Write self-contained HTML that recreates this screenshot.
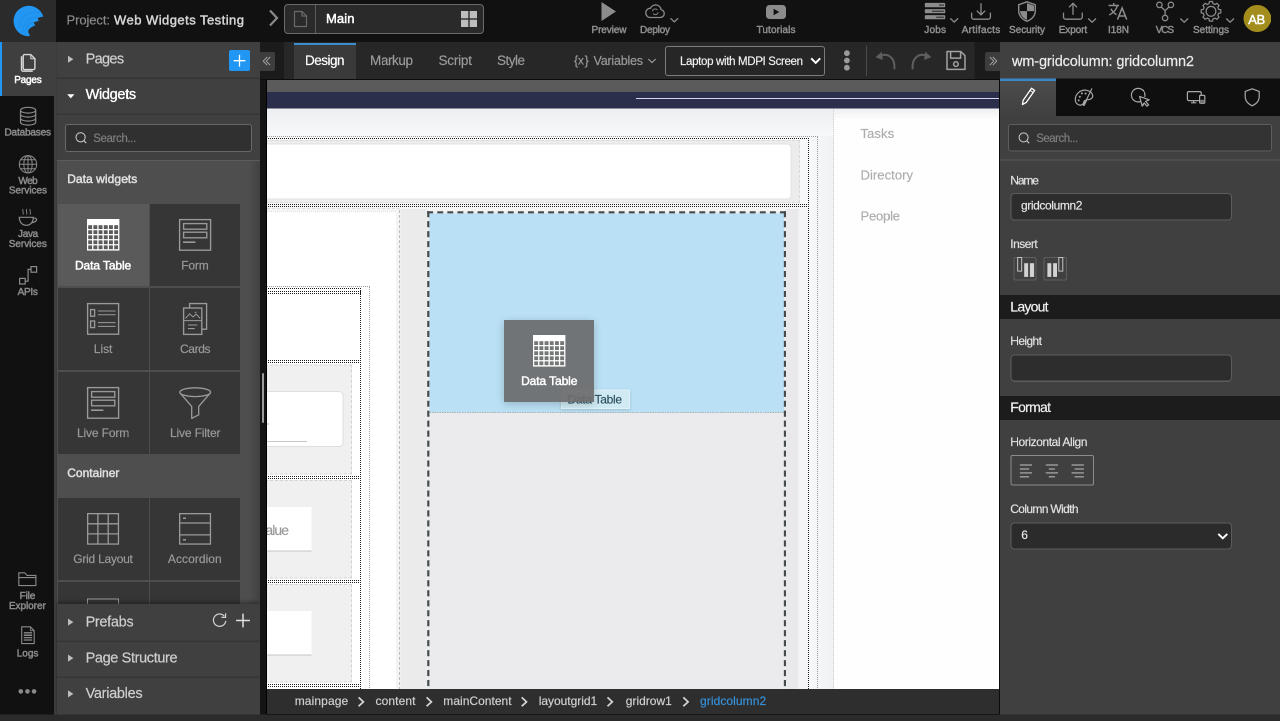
<!DOCTYPE html>
<html>
<head>
<meta charset="utf-8">
<title>Studio</title>
<style>
*{box-sizing:border-box;margin:0;padding:0}
html,body{width:1280px;height:721px;overflow:hidden;background:#111;font-family:"Liberation Sans",sans-serif;}
.a{position:absolute}
.t{position:absolute;white-space:nowrap;line-height:1}
svg{position:absolute;overflow:visible}
#clip{position:absolute;left:0;top:0;width:1280px;height:721px;overflow:hidden}
#outer{position:absolute;left:0;top:0;width:2560px;height:1442px;transform:scale(.5);transform-origin:0 0;will-change:transform;overflow:hidden}
#root{position:relative;width:1280px;height:721px;overflow:hidden;background:#111;zoom:2}
</style>
</head>
<body>
<div id="clip"><div id="outer"><div id="root">

<!-- TOP BAR -->
<div class="a" style="left:0;top:0;width:1280px;height:42px;background:#111"></div>
<div class="a" style="left:0;top:0;width:56px;height:42px;background:#2b2b2b"></div>
<svg style="left:0;top:0" width="56" height="42" viewBox="0 0 56 42"><path fill="#2196f3" d="M43.3 16.6 A15.2 15.2 0 1 0 28.4 36.2 L30.3 35.3 Q27.4 32.6 28.5 30.2 Q29.6 27.6 35.4 25.4 Q34 24.2 33.9 22.6 Q35.6 21.4 39 21 Q37.8 19.6 37.9 18 Q40 16.8 43.3 16.6Z"/>
<g fill="none" stroke="#1a7fd4" stroke-width="0.7" opacity="0.55"><path d="M38 17.6 Q24 16 22.5 33"/><path d="M34 22.4 Q25.6 22.6 25.6 35"/><path d="M40.6 13 Q22 8.5 18.6 29"/></g></svg>
<div class="t" style="left:66.50px;top:13.50px;font-size:13px;color:#8a8a8a;letter-spacing:-0.083px;-webkit-text-stroke:0.18px #8a8a8a;">Project:</div>
<div class="t" style="left:114.00px;top:13.50px;font-size:13px;color:#d4d4d4;letter-spacing:0.464px;-webkit-text-stroke:0.48px #d4d4d4;">Web Widgets Testing</div>
<svg style="left:0;top:0" width="300" height="42"><path d="M270 10.5 L277 18 L270 25.5" fill="none" stroke="#8a8a8a" stroke-width="2.2"/></svg>
<div class="a" style="left:284px;top:4px;width:200px;height:30px;background:#2a2a2a;border:1px solid #6a6a6a;border-radius:4px"></div>
<div class="a" style="left:315px;top:5px;width:1px;height:28px;background:#5a5a5a"></div>
<svg style="left:0;top:0" width="500" height="42"><path d="M294.5 11.5 h7.5 l4.5 4.5 v10.5 h-12 z M302 11.5 v4.5 h4.5" fill="none" stroke="#696969" stroke-width="1.2"/></svg>
<div class="t" style="left:326.00px;top:12.00px;font-size:13px;color:#fff;letter-spacing:0.107px;-webkit-text-stroke:0.48px #fff;">Main</div>
<svg style="left:461px;top:11px" width="16" height="16"><g fill="#bebebe"><rect x="0" y="0" width="7.3" height="7.3"/><rect x="8.7" y="0" width="7.3" height="7.3"/><rect x="0" y="8.7" width="7.3" height="7.3"/><rect x="8.7" y="8.7" width="7.3" height="7.3"/></g></svg>
<svg style="left:0;top:0" width="1280" height="42"><path d="M601.5 2 L616 11.5 L601.5 21Z" fill="#8c8c8c"/></svg>
<div class="t" style="left:591.50px;top:24.50px;font-size:10px;color:#8c8c8c;letter-spacing:-0.095px;-webkit-text-stroke:0.48px #8c8c8c;">Preview</div>
<svg style="left:0;top:0" width="1280" height="42"><path d="M649.5 17.5 h11 a4 4 0 0 0 0.6 -7.9 a5.6 5.6 0 0 0 -10.6 -1.4 a4.7 4.7 0 0 0 -1 9.3z" fill="none" stroke="#8c8c8c" stroke-width="1.3"/>
<path d="M652.3 11.3 a3 3 0 0 1 5.2 -1.3 M658.2 12.3 a3 3 0 0 1 -5.2 1.3" fill="none" stroke="#8c8c8c" stroke-width="0.9"/>
<path d="M670.5 18.3 l3.8 3.6 l3.8 -3.6" fill="none" stroke="#8c8c8c" stroke-width="1.3"/></svg>
<div class="t" style="left:640.00px;top:24.50px;font-size:10px;color:#8c8c8c;letter-spacing:-0.227px;-webkit-text-stroke:0.48px #8c8c8c;">Deploy</div>
<svg style="left:0;top:0" width="1280" height="42"><rect x="766" y="5" width="20" height="14" rx="3.5" fill="#8c8c8c"/><path d="M773.6 8.8 L779.3 12 L773.6 15.2Z" fill="#111"/></svg>
<div class="t" style="left:756.50px;top:24.50px;font-size:10px;color:#8c8c8c;letter-spacing:0.128px;-webkit-text-stroke:0.48px #8c8c8c;">Tutorials</div>
<svg style="left:0;top:0" width="1280" height="42"><g fill="#8c8c8c"><rect x="924.8" y="2.9" width="20.4" height="4.4" rx="0.8"/><rect x="924.8" y="9.1" width="20.4" height="4.2" rx="0.8"/><rect x="924.8" y="15.1" width="20.4" height="4.2" rx="0.8"/></g>
<g fill="#222"><rect x="939" y="4.6" width="5" height="1"/><rect x="932" y="10.7" width="11.8" height="1"/><rect x="936.3" y="16.7" width="7.6" height="1"/></g>
<path d="M950.3 18.4 l3.9 3.7 l3.9 -3.7" fill="none" stroke="#8c8c8c" stroke-width="1.3"/></svg>
<div class="t" style="left:924.30px;top:24.50px;font-size:10px;color:#8c8c8c;letter-spacing:0.192px;-webkit-text-stroke:0.48px #8c8c8c;">Jobs</div>
<svg style="left:0;top:0" width="1280" height="42"><path d="M971.6 12.6 v4.4 a2.2 2.2 0 0 0 2.2 2.2 h14.4 a2.2 2.2 0 0 0 2.2 -2.2 v-4.4 M981 3.3 v11.3 M976.8 10.7 l4.2 4.1 l4.2 -4.1" fill="none" stroke="#8c8c8c" stroke-width="1.3"/></svg>
<div class="t" style="left:961.70px;top:24.50px;font-size:10px;color:#8c8c8c;letter-spacing:0.297px;-webkit-text-stroke:0.48px #8c8c8c;">Artifacts</div>
<svg style="left:0;top:0" width="1280" height="42"><path d="M1027 1.8 l8.3 2.9 v6 c0 5 -3.5 8.8 -8.3 10.5 c-4.8 -1.7 -8.3 -5.5 -8.3 -10.5 v-6z" fill="none" stroke="#8c8c8c" stroke-width="1.4"/>
<path d="M1027 3.2 v7.9 h7 v-5.5z M1027 11.1 h-7 c0.5 4.2 3 7.2 7 8.7z" fill="#8c8c8c"/></svg>
<div class="t" style="left:1009.00px;top:24.50px;font-size:10px;color:#8c8c8c;letter-spacing:-0.018px;-webkit-text-stroke:0.48px #8c8c8c;">Security</div>
<svg style="left:0;top:0" width="1280" height="42"><path d="M1063.5 12.6 v4.4 a2.2 2.2 0 0 0 2.2 2.2 h14.4 a2.2 2.2 0 0 0 2.2 -2.2 v-4.4 M1073 14.8 v-11.3 M1069 7.3 l4 -4 l4 4" fill="none" stroke="#8c8c8c" stroke-width="1.3"/>
<path d="M1088.2 18.5 l3.9 3.7 l3.9 -3.7" fill="none" stroke="#8c8c8c" stroke-width="1.3"/></svg>
<div class="t" style="left:1058.70px;top:24.50px;font-size:10px;color:#8c8c8c;letter-spacing:-0.081px;-webkit-text-stroke:0.48px #8c8c8c;">Export</div>
<svg style="left:0;top:0" width="1280" height="42"><path d="M1108.5 5.5 h10.5 M1113.7 3 v2.5 M1117.3 5.5 c-0.8 3.8 -3.8 7.2 -8 9.5 M1111 8.7 c1 2.4 3 4.4 5.6 6" fill="none" stroke="#8c8c8c" stroke-width="1.4"/>
<path d="M1117.5 19.5 l4.6 -11.5 l4.6 11.5 M1119 16 h6.2" fill="none" stroke="#8c8c8c" stroke-width="1.6"/></svg>
<div class="t" style="left:1108.00px;top:24.50px;font-size:10px;color:#8c8c8c;letter-spacing:-0.042px;-webkit-text-stroke:0.48px #8c8c8c;">I18N</div>
<svg style="left:0;top:0" width="1280" height="42"><g fill="none" stroke="#8c8c8c" stroke-width="1.3"><circle cx="1159.4" cy="4.9" r="2.7"/><circle cx="1170.9" cy="4.9" r="2.7"/><circle cx="1165.1" cy="18" r="2.7"/><path d="M1161.2 7 l3.9 3.6 l3.9 -3.6 M1165.1 10.6 v4.7"/></g>
<path d="M1180.3 18.5 l3.9 3.7 l3.9 -3.7" fill="none" stroke="#8c8c8c" stroke-width="1.3"/></svg>
<div class="t" style="left:1155.80px;top:24.50px;font-size:10px;color:#8c8c8c;letter-spacing:-1.181px;-webkit-text-stroke:0.48px #8c8c8c;">VCS</div>
<svg style="left:0;top:0" width="1280" height="42"><path d="M1218.65 9.34 L1220.78 9.75 L1220.78 12.85 L1218.65 13.26 L1217.80 15.32 L1219.01 17.12 L1216.82 19.31 L1215.02 18.10 L1212.96 18.95 L1212.55 21.08 L1209.45 21.08 L1209.04 18.95 L1206.98 18.10 L1205.18 19.31 L1202.99 17.12 L1204.20 15.32 L1203.35 13.26 L1201.22 12.85 L1201.22 9.75 L1203.35 9.34 L1204.20 7.28 L1202.99 5.48 L1205.18 3.29 L1206.98 4.50 L1209.04 3.65 L1209.45 1.52 L1212.55 1.52 L1212.96 3.65 L1215.02 4.50 L1216.82 3.29 L1219.01 5.48 L1217.80 7.28Z" fill="none" stroke="#8c8c8c" stroke-width="1.25" stroke-linejoin="round"/><circle cx="1211" cy="11.3" r="4.9" fill="none" stroke="#8c8c8c" stroke-width="1.25"/>
<path d="M1226.2 18.5 l3.9 3.7 l3.9 -3.7" fill="none" stroke="#8c8c8c" stroke-width="1.3"/></svg>
<div class="t" style="left:1193.00px;top:24.50px;font-size:10px;color:#8c8c8c;letter-spacing:-0.019px;-webkit-text-stroke:0.48px #8c8c8c;">Settings</div>
<div class="a" style="left:1243.7px;top:4.8px;width:27.2px;height:27.2px;border-radius:50%;background:#a38d1c"></div>
<div class="t" style="left:1248.20px;top:13.00px;font-size:13px;color:#fff;letter-spacing:-0.344px;-webkit-text-stroke:0.48px #fff;">AB</div>
<!-- TOOLBAR -->
<div class="a" style="left:260px;top:42px;width:740px;height:38px;background:#1b1b1b"></div>
<div class="a" style="left:284px;top:42px;width:690.4px;height:37px;background:#272727"></div>
<div class="a" style="left:260px;top:79px;width:740px;height:1px;background:#0c0c0c"></div>
<div class="a" style="left:260px;top:52px;width:15px;height:19px;background:#3d3d3d;border-radius:0 2px 2px 0"></div>
<svg style="left:0;top:0" width="1280" height="90"><path d="M267.2 57 l-4 4.1 l4 4.1 M270.2 57 l-4 4.1 l4 4.1" fill="none" stroke="#a8a8a8" stroke-width="0.9"/></svg>
<div class="a" style="left:294px;top:43px;width:62px;height:36px;background:#3a3a3a;border-top:2px solid #3c8dd0"></div>
<div class="t" style="left:305.00px;top:54.00px;font-size:13.5px;color:#fff;letter-spacing:-0.505px;-webkit-text-stroke:0.18px #fff;">Design</div>
<div class="t" style="left:370.00px;top:54.00px;font-size:13.5px;color:#9a9a9a;letter-spacing:-0.403px;-webkit-text-stroke:0.18px #9a9a9a;">Markup</div>
<div class="t" style="left:438.50px;top:54.00px;font-size:13.5px;color:#9a9a9a;letter-spacing:-0.203px;-webkit-text-stroke:0.18px #9a9a9a;">Script</div>
<div class="t" style="left:497.00px;top:54.00px;font-size:13.5px;color:#9a9a9a;letter-spacing:-0.504px;-webkit-text-stroke:0.18px #9a9a9a;">Style</div>
<div class="t" style="left:574.00px;top:54.50px;font-size:12.5px;color:#9a9a9a;-webkit-text-stroke:0.18px #9a9a9a;">{</div>
<div class="t" style="left:577.90px;top:54.50px;font-size:12px;color:#9a9a9a;-webkit-text-stroke:0.18px #9a9a9a;">x</div>
<div class="t" style="left:584.60px;top:54.50px;font-size:12.5px;color:#9a9a9a;-webkit-text-stroke:0.18px #9a9a9a;">}</div>
<div class="t" style="left:593.50px;top:54.50px;font-size:12.5px;color:#9a9a9a;letter-spacing:-0.211px;-webkit-text-stroke:0.18px #9a9a9a;">Variables</div>
<svg style="left:0;top:0" width="1280" height="90"><path d="M648.3 59 l3.7 3.6 l3.7 -3.6" fill="none" stroke="#9a9a9a" stroke-width="1.2"/></svg>
<div class="a" style="left:665px;top:46px;width:160px;height:30px;background:#262626;border:1px solid #7c7c7c;border-radius:3px"></div>
<div class="t" style="left:680.00px;top:55.50px;font-size:11.5px;color:#f0f0f0;letter-spacing:-0.336px;-webkit-text-stroke:0.18px #f0f0f0;">Laptop with MDPI Screen</div>
<svg style="left:0;top:0" width="1280" height="90"><path d="M811.2 58.3 l4.5 4.5 l4.5 -4.5" fill="none" stroke="#fff" stroke-width="2"/></svg>
<svg style="left:0;top:0" width="1280" height="90"><g fill="#9a9a9a"><circle cx="846.9" cy="53.2" r="2.9"/><circle cx="846.9" cy="60.5" r="2.9"/><circle cx="846.9" cy="67.7" r="2.9"/></g></svg>
<div class="a" style="left:866px;top:45.8px;width:1px;height:30.2px;background:#4c4c4c"></div>
<svg style="left:0;top:0" width="1280" height="90"><g fill="none" stroke="#5e5e5e" stroke-width="2" stroke-linecap="round">
<path d="M881 55.8 C888 52.6 895.2 58 894.4 68.6"/><path d="M926 55.8 C919 52.6 911.8 58 912.6 68.6"/></g>
<g fill="#5e5e5e"><path d="M875.6 57.3 L881.8 51.6 L882.8 60z"/><path d="M931.4 57.3 L925.2 51.6 L924.2 60z"/></g>
<g fill="none" stroke="#a2a2a2" stroke-width="1.5" stroke-linejoin="round"><path d="M947 51.5 h13.8 l4.2 4.2 v13.7 h-18z"/><path d="M950.6 51.5 v6.6 h10 v-6.6"/><circle cx="955.9" cy="64.1" r="2.3"/></g></svg>
<div class="a" style="left:985px;top:52px;width:15px;height:19px;background:#3d3d3d;border-radius:2px 0 0 2px"></div>
<svg style="left:0;top:0" width="1280" height="90"><path d="M989.8 57 l4 4.1 l-4 4.1 M992.8 57 l4 4.1 l-4 4.1" fill="none" stroke="#a8a8a8" stroke-width="0.9"/></svg>
<!-- ICON BAR -->
<div class="a" style="left:0;top:42px;width:54px;height:672.7px;background:#111"></div>
<div class="a" style="left:54px;top:42px;width:3px;height:672.7px;background:#3f3f3f"></div>
<div class="a" style="left:0;top:42px;width:56.3px;height:54px;background:#3f3f3f;border-left:2.2px solid #2196f3"></div>
<div class="a" style="left:56.3px;top:42px;width:0.8px;height:672.5px;background:#373737"></div>
<svg style="left:0;top:0" width="60" height="721"><g fill="none" stroke="#d8d8d8" stroke-width="1.4" stroke-linejoin="round">
<path d="M21.5 56.2 v13.4 a1.6 1.6 0 0 0 1.6 1.6 h9.6"/><path d="M24.6 54.6 h6.2 l4.1 4.1 v9.5 a1.4 1.4 0 0 1 -1.4 1.4 h-8.9 a1.4 1.4 0 0 1 -1.4 -1.4 v-12.2 a1.4 1.4 0 0 1 1.4 -1.4z"/><path d="M30.8 54.6 v4.1 h4.1" stroke-width="1"/></g></svg>
<div class="t" style="left:14.20px;top:74.50px;font-size:10px;color:#fff;letter-spacing:-0.190px;-webkit-text-stroke:0.48px #fff;">Pages</div>
<svg style="left:0;top:0" width="60" height="721"><g fill="none" stroke="#8a8a8a" stroke-width="1.2">
<ellipse cx="28.1" cy="110.2" rx="7.6" ry="2.9"/><path d="M20.5 110.2 v12 a7.6 2.9 0 0 0 15.2 0 v-12"/><path d="M20.5 114.2 a7.6 2.9 0 0 0 15.2 0 M20.5 118.2 a7.6 2.9 0 0 0 15.2 0"/></g></svg>
<div class="t" style="left:4.50px;top:127.00px;font-size:10px;color:#8a8a8a;letter-spacing:-0.164px;-webkit-text-stroke:0.48px #8a8a8a;">Databases</div>
<svg style="left:0;top:0" width="60" height="721"><g fill="none" stroke="#8a8a8a" stroke-width="1">
<circle cx="28" cy="164.3" r="8.7"/><ellipse cx="28" cy="164.3" rx="4.2" ry="8.7"/><path d="M28 155.6 v17.4 M19.3 164.3 h17.4 M20.6 159.8 h14.8 M20.6 168.8 h14.8"/></g></svg>
<div class="t" style="left:18.40px;top:175.50px;font-size:10px;color:#8a8a8a;letter-spacing:-0.541px;-webkit-text-stroke:0.48px #8a8a8a;">Web</div>
<div class="t" style="left:8.90px;top:185.00px;font-size:10px;color:#8a8a8a;letter-spacing:-0.036px;-webkit-text-stroke:0.48px #8a8a8a;">Services</div>
<svg style="left:0;top:0" width="60" height="721"><g fill="none" stroke="#8a8a8a" stroke-width="1.2">
<path d="M19.3 217.3 h14 c0 5 -3 8 -7 8 s-7 -3 -7 -8z"/><path d="M33.2 218.2 c3 -0.6 4 1 3 2.4 c-0.7 1 -2.4 1.8 -4.2 2"/>
<path d="M23 209 c-0.9 1.6 0.9 3.6 0 5.6 M26.6 209 c-0.9 1.6 0.9 3.6 0 5.6 M30.2 209 c-0.9 1.6 0.9 3.6 0 5.6" stroke-width="0.9"/></g></svg>
<div class="t" style="left:18.00px;top:228.50px;font-size:10px;color:#8a8a8a;letter-spacing:-0.308px;-webkit-text-stroke:0.48px #8a8a8a;">Java</div>
<div class="t" style="left:8.70px;top:238.50px;font-size:10px;color:#8a8a8a;letter-spacing:-0.022px;-webkit-text-stroke:0.48px #8a8a8a;">Services</div>
<svg style="left:0;top:0" width="60" height="721"><g fill="none" stroke="#8a8a8a" stroke-width="1.2">
<rect x="19.6" y="278.4" width="5.6" height="5.6"/><rect x="31" y="266.6" width="5.6" height="5.6"/><path d="M25.2 281.2 h2.9 v-11.8 h2.9"/></g></svg>
<div class="t" style="left:17.60px;top:286.50px;font-size:10px;color:#8a8a8a;letter-spacing:-0.275px;-webkit-text-stroke:0.48px #8a8a8a;">APIs</div>
<svg style="left:0;top:0" width="60" height="721"><g fill="none" stroke="#8a8a8a" stroke-width="1.1" stroke-linejoin="round">
<path d="M18.8 585.6 v-12.8 h6 l2.2 2.6 h8.9 v10.2z"/><path d="M18.8 577.6 h17.1"/></g></svg>
<div class="t" style="left:19.60px;top:590.50px;font-size:10px;color:#8a8a8a;letter-spacing:-0.139px;-webkit-text-stroke:0.48px #8a8a8a;">File</div>
<div class="t" style="left:8.90px;top:600.50px;font-size:10px;color:#8a8a8a;letter-spacing:-0.049px;-webkit-text-stroke:0.48px #8a8a8a;">Explorer</div>
<svg style="left:0;top:0" width="60" height="721"><g fill="none" stroke="#8a8a8a" stroke-width="1.1" stroke-linejoin="round">
<path d="M21.7 626.8 h8.6 l3.9 3.9 v12.9 h-12.5z"/><path d="M30.3 626.8 v3.9 h3.9" stroke-width="0.8"/></g>
<g stroke="#8a8a8a" stroke-width="1.3"><path d="M23.8 632.8 h8.3 M23.8 635.2 h8.3 M23.8 637.6 h8.3 M23.8 640 h8.3"/></g></svg>
<div class="t" style="left:16.70px;top:648.00px;font-size:10px;color:#8a8a8a;letter-spacing:0.004px;-webkit-text-stroke:0.48px #8a8a8a;">Logs</div>
<svg style="left:0;top:0" width="60" height="721"><g fill="#8a8a8a"><circle cx="20.8" cy="691.4" r="2.3"/><circle cx="27.45" cy="691.4" r="2.3"/><circle cx="34.05" cy="691.4" r="2.3"/></g></svg>
<!-- LEFT PANEL -->
<div class="a" style="left:57px;top:42px;width:203px;height:672.5px;background:#404040"></div>
<div class="a" style="left:57px;top:161px;width:203px;height:444px;background:#4e4e4e"></div><div class="a" style="left:248px;top:161px;width:12px;height:444px;background:linear-gradient(90deg,rgba(0,0,0,0),rgba(0,0,0,.16))"></div>
<div class="a" style="left:57px;top:77.5px;width:203px;height:1.5px;background:#333"></div>
<div class="a" style="left:57px;top:113.5px;width:203px;height:1.5px;background:#353535"></div>
<div class="a" style="left:57px;top:160.2px;width:203px;height:1px;background:#5c5c5c"></div>
<svg style="left:0;top:0" width="270" height="721"><path d="M68 55.8 l5.4 3.5 l-5.4 3.5z" fill="#bdbdbd"/><path d="M67.2 94.2 h7.2 l-3.6 4.2z" fill="#fff"/></svg>
<div class="t" style="left:85.60px;top:51.50px;font-size:14.5px;color:#cfcfcf;letter-spacing:-0.654px;-webkit-text-stroke:0.18px #cfcfcf;">Pages</div>
<div class="t" style="left:85.60px;top:87.00px;font-size:14.5px;color:#fff;letter-spacing:-0.314px;-webkit-text-stroke:0.32px #fff;">Widgets</div>
<div class="a" style="left:229px;top:50.2px;width:21px;height:21px;background:#2196f3;border-radius:2px"></div>
<svg style="left:0;top:0" width="270" height="100"><path d="M239.5 54.8 v11.8 M233.6 60.7 h11.8" stroke="#fff" stroke-width="1.3" fill="none"/></svg>
<div class="a" style="left:65px;top:124px;width:187px;height:28px;background:#303030;border:1px solid #686868;border-radius:3px"></div>
<svg style="left:0;top:0" width="270" height="200"><circle cx="80.6" cy="137.3" r="4.6" fill="none" stroke="#c0c0c0" stroke-width="1.1"/><path d="M84 140.8 l2.3 2.3" stroke="#c0c0c0" stroke-width="1.2"/></svg>
<div class="t" style="left:93.20px;top:132.50px;font-size:11.5px;color:#7e7e7e;letter-spacing:-0.378px;-webkit-text-stroke:0.18px #7e7e7e;">Search...</div>
<div class="t" style="left:67.20px;top:173.00px;font-size:12px;color:#e0e0e0;letter-spacing:0.057px;-webkit-text-stroke:0.48px #e0e0e0;">Data widgets</div>
<div class="t" style="left:67.20px;top:467.00px;font-size:12px;color:#e0e0e0;letter-spacing:0.021px;-webkit-text-stroke:0.48px #e0e0e0;">Container</div>
<div class="a" style="left:58px;top:204.2px;width:90.8px;height:82px;background:#363636"></div>
<div class="a" style="left:150.2px;top:204.2px;width:89.8px;height:82px;background:#363636"></div>
<div class="a" style="left:58px;top:288px;width:90.8px;height:82px;background:#363636"></div>
<div class="a" style="left:150.2px;top:288px;width:89.8px;height:82px;background:#363636"></div>
<div class="a" style="left:58px;top:371.8px;width:90.8px;height:82.2px;background:#363636"></div>
<div class="a" style="left:150.2px;top:371.8px;width:89.8px;height:82.2px;background:#363636"></div>
<div class="a" style="left:58px;top:498px;width:90.8px;height:82px;background:#363636"></div>
<div class="a" style="left:150.2px;top:498px;width:89.8px;height:82px;background:#363636"></div>
<div class="a" style="left:58px;top:204.2px;width:90.8px;height:82px;background:#5a5a5a"></div>
<div class="a" style="left:58px;top:582.2px;width:90.8px;height:23px;background:#363636"></div>
<div class="a" style="left:150.2px;top:582.2px;width:89.8px;height:23px;background:#363636"></div>
<svg style="left:87px;top:219.2px" width="32.4" height="31.6" viewBox="0 0 32.4 31.6"><rect width="32.4" height="31.6" fill="#fff"/><g fill="#5a5a5a"><rect x="1.20" y="6.20" width="3.9" height="3.8"/><rect x="6.40" y="6.20" width="3.9" height="3.8"/><rect x="11.60" y="6.20" width="3.9" height="3.8"/><rect x="16.80" y="6.20" width="3.9" height="3.8"/><rect x="22.00" y="6.20" width="3.9" height="3.8"/><rect x="27.20" y="6.20" width="3.9" height="3.8"/><rect x="1.20" y="11.25" width="3.9" height="3.8"/><rect x="6.40" y="11.25" width="3.9" height="3.8"/><rect x="11.60" y="11.25" width="3.9" height="3.8"/><rect x="16.80" y="11.25" width="3.9" height="3.8"/><rect x="22.00" y="11.25" width="3.9" height="3.8"/><rect x="27.20" y="11.25" width="3.9" height="3.8"/><rect x="1.20" y="16.30" width="3.9" height="3.8"/><rect x="6.40" y="16.30" width="3.9" height="3.8"/><rect x="11.60" y="16.30" width="3.9" height="3.8"/><rect x="16.80" y="16.30" width="3.9" height="3.8"/><rect x="22.00" y="16.30" width="3.9" height="3.8"/><rect x="27.20" y="16.30" width="3.9" height="3.8"/><rect x="1.20" y="21.35" width="3.9" height="3.8"/><rect x="6.40" y="21.35" width="3.9" height="3.8"/><rect x="11.60" y="21.35" width="3.9" height="3.8"/><rect x="16.80" y="21.35" width="3.9" height="3.8"/><rect x="22.00" y="21.35" width="3.9" height="3.8"/><rect x="27.20" y="21.35" width="3.9" height="3.8"/><rect x="1.20" y="26.40" width="3.9" height="3.8"/><rect x="6.40" y="26.40" width="3.9" height="3.8"/><rect x="11.60" y="26.40" width="3.9" height="3.8"/><rect x="16.80" y="26.40" width="3.9" height="3.8"/><rect x="22.00" y="26.40" width="3.9" height="3.8"/><rect x="27.20" y="26.40" width="3.9" height="3.8"/></g></svg>
<div class="t" style="left:75.00px;top:259.50px;font-size:12px;color:#fff;letter-spacing:-0.106px;-webkit-text-stroke:0.48px #fff;">Data Table</div>
<svg style="left:179.2px;top:219.2px" width="33" height="33"><g fill="none" stroke="#9a9a9a" stroke-width="1.35"><rect x="0.6" y="0.6" width="31" height="30.6"/><rect x="4.6" y="4.6" width="23.2" height="5.6"/><rect x="4.6" y="13.2" width="23.2" height="5.6"/></g><path d="M4 23.2 h12.4" stroke="#9a9a9a" stroke-width="1.6"/></svg>
<div class="t" style="left:181.30px;top:259.50px;font-size:12px;color:#9a9a9a;letter-spacing:-0.200px;-webkit-text-stroke:0.18px #9a9a9a;">Form</div>
<svg style="left:87px;top:303.2px" width="33" height="33"><g fill="none" stroke="#9a9a9a" stroke-width="1.35"><rect x="0.6" y="0.6" width="31" height="30.6"/><rect x="3.6" y="6.6" width="4" height="6.6"/><rect x="3.6" y="18" width="4" height="6.6"/>
<path d="M11 8 h17.6 M11 11.8 h17.6 M11 19.6 h17.6 M11 23.4 h17.6" stroke-width="1"/></g></svg>
<div class="t" style="left:93.80px;top:343.00px;font-size:12px;color:#9a9a9a;letter-spacing:-0.027px;-webkit-text-stroke:0.18px #9a9a9a;">List</div>
<svg style="left:183px;top:303.2px" width="30" height="33"><g fill="none" stroke="#9a9a9a" stroke-width="1.35"><path d="M6.6 5 v-4.4 h17 v25.6 h-4.6"/><rect x="0.6" y="5" width="18.2" height="26.4" fill="#363636"/>
<path d="M2.4 15.4 l4.2 -4.6 l3.4 3.2 l3.2 -2.8 l4 4.2 M0.6 17.6 h18.2" stroke-width="1"/><path d="M5 22 h9.4 M5 25.6 h6.8" stroke-width="1.1"/></g><circle cx="12.6" cy="9.4" r="0.8" fill="#9a9a9a"/></svg>
<div class="t" style="left:180.00px;top:343.00px;font-size:12px;color:#9a9a9a;letter-spacing:-0.379px;-webkit-text-stroke:0.18px #9a9a9a;">Cards</div>
<svg style="left:87px;top:387px" width="33" height="33"><g fill="none" stroke="#9a9a9a" stroke-width="1.35"><rect x="0.6" y="0.6" width="31" height="30.6"/><rect x="4.6" y="4.6" width="23.2" height="5.6"/><rect x="4.6" y="13.2" width="23.2" height="5.6"/></g><path d="M4 23.2 h12.4" stroke="#9a9a9a" stroke-width="1.6"/></svg>
<div class="t" style="left:77.00px;top:427.00px;font-size:12px;color:#9a9a9a;letter-spacing:-0.143px;-webkit-text-stroke:0.18px #9a9a9a;">Live Form</div>
<svg style="left:179px;top:387px" width="33" height="33"><g fill="none" stroke="#9a9a9a" stroke-width="1.3" stroke-linejoin="round"><ellipse cx="16.2" cy="5.2" rx="15.4" ry="4.4"/><path d="M0.9 5.8 l11.8 13.6 v12 l7 -3.6 v-8.4 l11.8 -13.6"/></g></svg>
<div class="t" style="left:170.00px;top:427.00px;font-size:12px;color:#9a9a9a;letter-spacing:-0.152px;-webkit-text-stroke:0.18px #9a9a9a;">Live Filter</div>
<svg style="left:87px;top:513px" width="33" height="33"><g fill="none" stroke="#9a9a9a" stroke-width="1.3"><rect x="0.65" y="0.65" width="30.8" height="30.4"/><path d="M10.9 0.65 v30.4 M21.2 0.65 v30.4 M0.65 10.8 h30.8 M0.65 20.9 h30.8"/></g></svg>
<div class="t" style="left:73.30px;top:553.00px;font-size:12px;color:#9a9a9a;letter-spacing:-0.244px;-webkit-text-stroke:0.18px #9a9a9a;">Grid Layout</div>
<svg style="left:179.2px;top:513px" width="33" height="33"><g fill="none" stroke="#9a9a9a" stroke-width="1.3"><rect x="0.65" y="0.65" width="30.8" height="30.4"/><path d="M0.65 10 h30.8 M0.65 21.9 h30.8"/></g><path d="M4 5.3 h3 M4 26.8 h3" stroke="#9a9a9a" stroke-width="1.5"/></svg>
<div class="t" style="left:167.90px;top:553.00px;font-size:12px;color:#9a9a9a;letter-spacing:0.054px;-webkit-text-stroke:0.18px #9a9a9a;">Accordion</div>
<div class="a" style="left:87px;top:598.6px;width:32px;height:7px;border:1.3px solid #9a9a9a;border-bottom:none"></div>
<div class="a" style="left:57px;top:604px;width:203px;height:110.5px;background:#404040;box-shadow:0 -2px 4px rgba(0,0,0,.35)"></div>
<div class="a" style="left:57px;top:640.5px;width:203px;height:1.5px;background:#353535"></div>
<div class="a" style="left:57px;top:676.7px;width:203px;height:1.5px;background:#353535"></div>
<svg style="left:0;top:0" width="270" height="721"><g fill="#bdbdbd"><path d="M68 618.6 l5.4 3.5 l-5.4 3.5z"/><path d="M68 654.6 l5.4 3.5 l-5.4 3.5z"/><path d="M68 690.4 l5.4 3.5 l-5.4 3.5z"/></g></svg>
<div class="t" style="left:85.60px;top:614.50px;font-size:14.5px;color:#cfcfcf;letter-spacing:-0.329px;-webkit-text-stroke:0.18px #cfcfcf;">Prefabs</div>
<div class="t" style="left:85.60px;top:650.50px;font-size:14.5px;color:#cfcfcf;letter-spacing:-0.364px;-webkit-text-stroke:0.18px #cfcfcf;">Page Structure</div>
<div class="t" style="left:85.60px;top:686.00px;font-size:14.5px;color:#cfcfcf;letter-spacing:-0.297px;-webkit-text-stroke:0.18px #cfcfcf;">Variables</div>
<svg style="left:0;top:0" width="270" height="721"><g fill="none" stroke="#d0d0d0" stroke-width="1.2"><path d="M224.4 616.2 a6.2 6.2 0 1 0 1.4 4.6"/><path d="M225.6 613.2 v4.2 h-4.2"/></g>
<path d="M243 613.6 v13.8 M236.1 620.5 h13.8" stroke="#e0e0e0" stroke-width="1.5" fill="none"/></svg>
<!-- CANVAS -->
<div class="a" style="left:267px;top:80px;width:732px;height:609px;background:#f5f6f8;overflow:hidden">
<div class="a" style="left:0.00px;top:0.00px;width:732.00px;height:12.00px;background:#5b5b5b"></div>
<div class="a" style="left:0.00px;top:12.00px;width:732.00px;height:16.70px;background:#2c2f4b"></div>
<div class="a" style="left:369.00px;top:17.80px;width:363.00px;height:1.00px;background:#d5d8ea"></div>
<div class="a" style="left:0.00px;top:28.70px;width:567.00px;height:28.00px;background:linear-gradient(180deg,#eceef1,#f7f8f9)"></div>
<div class="a" style="left:0.00px;top:56.00px;width:567.00px;height:553.00px;background:#f6f7f8"></div>
<div class="a" style="left:542.00px;top:56.00px;width:25.00px;height:553.00px;background:linear-gradient(90deg,#f7f8f9,#eff1f3)"></div>
<div class="a" style="left:567.00px;top:28.70px;width:165.00px;height:581.00px;background:#fefefe"></div>
<div class="a" style="left:567.00px;top:28.70px;width:165.00px;height:12.00px;background:linear-gradient(180deg,#eeeff1,#fefefe)"></div>
<div class="a" style="left:566.00px;top:29.00px;width:1.00px;height:581.00px;background:repeating-linear-gradient(180deg,#cfcfcf 0 1px,transparent 1px 2px)"></div>
<div class="t" style="left:593.50px;top:47.00px;font-size:13px;color:#adadad;letter-spacing:0.091px;-webkit-text-stroke:0.18px #adadad;">Tasks</div>
<div class="t" style="left:593.50px;top:88.50px;font-size:13px;color:#adadad;letter-spacing:0.062px;-webkit-text-stroke:0.18px #adadad;">Directory</div>
<div class="t" style="left:593.50px;top:129.50px;font-size:13px;color:#adadad;letter-spacing:-0.197px;-webkit-text-stroke:0.18px #adadad;">People</div>
<div class="a" style="left:-7.00px;top:60.00px;width:539.80px;height:63.00px;background:#ececec;border:1px dashed #d8d8d8"></div>
<div class="a" style="left:-7.00px;top:63.50px;width:531.50px;height:56.00px;background:#fff;border:1px solid #e2e2e2;border-radius:4px"></div>
<div class="a" style="left:0.00px;top:128.00px;width:541.00px;height:481.00px;background:#f5f5f6"></div>
<div class="a" style="left:-7.00px;top:131.00px;width:137.50px;height:480.00px;background:#fff;border:1px dotted #dcdcdc;border-radius:3px"></div>
<div class="a" style="left:0.00px;top:128.20px;width:133.00px;height:1.00px;border-top:1px dashed #e0e0e0"></div>
<div class="a" style="left:132.20px;top:130.00px;width:1.00px;height:480.00px;border-left:1px dashed #bdbdbd"></div>
<div class="a" style="left:133.50px;top:129.00px;width:27.00px;height:480.00px;background:#ebebec"></div>
<div class="a" style="left:161.00px;top:131.50px;width:358.00px;height:478.00px;background:#ebebed"></div>
<div class="a" style="left:162.40px;top:133.40px;width:354.60px;height:199.00px;background:#b9e0f4"></div>
<div class="a" style="left:162.40px;top:332.00px;width:354.60px;height:1.00px;border-top:0.8px dashed #66747a"></div>
<svg style="left:0;top:0" width="732" height="609"><path d="M161.3 131.15 V620" stroke="#454b4d" stroke-width="2.2" fill="none" stroke-dasharray="6.1 3.876"/><path d="M160.2 132.3 H519.1" stroke="#454b4d" stroke-width="2.2" fill="none" stroke-dasharray="5.9 4.18"/><path d="M517.95 131.15 V620" stroke="#454b4d" stroke-width="2.2" fill="none" stroke-dasharray="6.1 3.876"/></svg>
<div class="a" style="left:519.10px;top:129.00px;width:12.40px;height:481.00px;background:#e9e9eb"></div>
<div class="a" style="left:531.50px;top:129.00px;width:10.00px;height:481.00px;background:#f4f4f6"></div>
<div class="a" style="left:0.00px;top:56.00px;width:551.00px;height:1.00px;background:repeating-linear-gradient(90deg,#9c9c9c 0 1px,transparent 1px 2px)"></div>
<div class="a" style="left:550.00px;top:57.00px;width:1.00px;height:553.00px;background:repeating-linear-gradient(180deg,#9c9c9c 0 1px,transparent 1px 2px)"></div>
<div class="a" style="left:1.00px;top:58.00px;width:541.00px;height:1.00px;background:repeating-linear-gradient(90deg,#1c1c1c 0 1px,transparent 1px 2px)"></div>
<div class="a" style="left:541.00px;top:58.00px;width:1.00px;height:552.00px;background:repeating-linear-gradient(180deg,#1c1c1c 0 1px,transparent 1px 2px)"></div>
<div class="a" style="left:1.00px;top:124.00px;width:541.00px;height:1.00px;background:repeating-linear-gradient(90deg,#1c1c1c 0 1px,transparent 1px 2px)"></div>
<div class="a" style="left:1.00px;top:126.00px;width:541.00px;height:1.00px;background:repeating-linear-gradient(90deg,#1c1c1c 0 1px,transparent 1px 2px)"></div>
<div class="a" style="left:0.00px;top:206.00px;width:103.00px;height:1.00px;background:repeating-linear-gradient(90deg,#9c9c9c 0 1px,transparent 1px 2px)"></div>
<div class="a" style="left:102.00px;top:207.00px;width:1.00px;height:403.00px;background:repeating-linear-gradient(180deg,#9c9c9c 0 1px,transparent 1px 2px)"></div>
<div class="a" style="left:1.00px;top:208.00px;width:93.00px;height:1.00px;background:repeating-linear-gradient(90deg,#1c1c1c 0 1px,transparent 1px 2px)"></div>
<div class="a" style="left:1.00px;top:211.00px;width:93.00px;height:1.00px;background:repeating-linear-gradient(90deg,#1c1c1c 0 1px,transparent 1px 2px)"></div>
<div class="a" style="left:1.00px;top:213.00px;width:93.00px;height:1.00px;background:repeating-linear-gradient(90deg,#1c1c1c 0 1px,transparent 1px 2px)"></div>
<div class="a" style="left:93.00px;top:208.00px;width:1.00px;height:402.00px;background:repeating-linear-gradient(180deg,#1c1c1c 0 1px,transparent 1px 2px)"></div>
<div class="a" style="left:1.00px;top:280.00px;width:93.00px;height:1.00px;background:repeating-linear-gradient(90deg,#1c1c1c 0 1px,transparent 1px 2px)"></div>
<div class="a" style="left:1.00px;top:282.00px;width:93.00px;height:1.00px;background:repeating-linear-gradient(90deg,#1c1c1c 0 1px,transparent 1px 2px)"></div>
<div class="a" style="left:1.00px;top:396.00px;width:93.00px;height:1.00px;background:repeating-linear-gradient(90deg,#1c1c1c 0 1px,transparent 1px 2px)"></div>
<div class="a" style="left:1.00px;top:398.00px;width:93.00px;height:1.00px;background:repeating-linear-gradient(90deg,#1c1c1c 0 1px,transparent 1px 2px)"></div>
<div class="a" style="left:1.00px;top:500.00px;width:93.00px;height:1.00px;background:repeating-linear-gradient(90deg,#1c1c1c 0 1px,transparent 1px 2px)"></div>
<div class="a" style="left:1.00px;top:502.00px;width:93.00px;height:1.00px;background:repeating-linear-gradient(90deg,#1c1c1c 0 1px,transparent 1px 2px)"></div>
<div class="a" style="left:1.00px;top:604.00px;width:93.00px;height:1.00px;background:repeating-linear-gradient(90deg,#1c1c1c 0 1px,transparent 1px 2px)"></div>
<div class="a" style="left:1.00px;top:606.00px;width:93.00px;height:1.00px;background:repeating-linear-gradient(90deg,#1c1c1c 0 1px,transparent 1px 2px)"></div>
<div class="a" style="left:-7.00px;top:284.30px;width:91.80px;height:110.40px;background:#f0f0f0;border:1px dashed #d2d2d2"></div>
<div class="a" style="left:-7.00px;top:311.20px;width:83.50px;height:56.00px;background:#fff;border:1px solid #dedede;border-radius:4.5px"></div>
<div class="a" style="left:0.00px;top:360.80px;width:40.00px;height:1.00px;background:#c8c8c8"></div>
<div class="a" style="left:0.60px;top:343.40px;width:1.20px;height:1.20px;background:#999"></div>
<div class="a" style="left:-7.00px;top:399.80px;width:91.80px;height:98.60px;background:#f0f0f0;border:1px dashed #d2d2d2"></div>
<div class="a" style="left:-7.00px;top:426.80px;width:51.30px;height:44.50px;background:#fff;border-bottom:1px solid #c4c4c4"></div>
<div class="t" style="left:-1.60px;top:443.50px;font-size:14px;color:#9a9a9a;letter-spacing:-0.956px;-webkit-text-stroke:0.18px #9a9a9a;">alue</div>
<div class="a" style="left:-7.00px;top:503.80px;width:91.80px;height:98.80px;background:#f0f0f0;border:1px dashed #d2d2d2"></div>
<div class="a" style="left:-7.00px;top:530.80px;width:51.30px;height:44.60px;background:#fff;border-bottom:1px solid #c4c4c4"></div>
<div class="a" style="left:293.80px;top:309.60px;width:69.40px;height:19.20px;background:#cfeaf3;border:1px solid #dff2f8;box-shadow:0 1px 3px rgba(0,0,0,.15)"></div>
<div class="t" style="left:300.50px;top:313.50px;font-size:12px;color:#2d5160;letter-spacing:-0.295px;-webkit-text-stroke:0.18px #2d5160;">Data Table</div>
<div class="a" style="left:237.00px;top:239.80px;width:90.00px;height:82.20px;background:rgba(108,108,108,.93);box-shadow:0 2px 8px rgba(0,0,0,.2)"></div>
<svg style="left:265.79999999999995px;top:254.8px" width="32.4" height="31.6" viewBox="0 0 32.4 31.6"><rect width="32.4" height="31.6" fill="#fff"/><g fill="#757777"><rect x="1.20" y="6.20" width="3.9" height="3.8"/><rect x="6.40" y="6.20" width="3.9" height="3.8"/><rect x="11.60" y="6.20" width="3.9" height="3.8"/><rect x="16.80" y="6.20" width="3.9" height="3.8"/><rect x="22.00" y="6.20" width="3.9" height="3.8"/><rect x="27.20" y="6.20" width="3.9" height="3.8"/><rect x="1.20" y="11.25" width="3.9" height="3.8"/><rect x="6.40" y="11.25" width="3.9" height="3.8"/><rect x="11.60" y="11.25" width="3.9" height="3.8"/><rect x="16.80" y="11.25" width="3.9" height="3.8"/><rect x="22.00" y="11.25" width="3.9" height="3.8"/><rect x="27.20" y="11.25" width="3.9" height="3.8"/><rect x="1.20" y="16.30" width="3.9" height="3.8"/><rect x="6.40" y="16.30" width="3.9" height="3.8"/><rect x="11.60" y="16.30" width="3.9" height="3.8"/><rect x="16.80" y="16.30" width="3.9" height="3.8"/><rect x="22.00" y="16.30" width="3.9" height="3.8"/><rect x="27.20" y="16.30" width="3.9" height="3.8"/><rect x="1.20" y="21.35" width="3.9" height="3.8"/><rect x="6.40" y="21.35" width="3.9" height="3.8"/><rect x="11.60" y="21.35" width="3.9" height="3.8"/><rect x="16.80" y="21.35" width="3.9" height="3.8"/><rect x="22.00" y="21.35" width="3.9" height="3.8"/><rect x="27.20" y="21.35" width="3.9" height="3.8"/><rect x="1.20" y="26.40" width="3.9" height="3.8"/><rect x="6.40" y="26.40" width="3.9" height="3.8"/><rect x="11.60" y="26.40" width="3.9" height="3.8"/><rect x="16.80" y="26.40" width="3.9" height="3.8"/><rect x="22.00" y="26.40" width="3.9" height="3.8"/><rect x="27.20" y="26.40" width="3.9" height="3.8"/></g></svg>
<div class="t" style="left:254.10px;top:295.00px;font-size:12px;color:#fff;letter-spacing:-0.095px;-webkit-text-stroke:0.48px #fff;">Data Table</div>
</div>
<div class="a" style="left:999px;top:80px;width:1px;height:635px;background:#0a0a0a"></div>
<div class="a" style="left:260px;top:80px;width:7px;height:634.8px;background:linear-gradient(90deg,#141414 0 5.9px,#000 5.9px)"></div>
<div class="a" style="left:261.8px;top:372.8px;width:2.3px;height:50px;background:#9c9c9c;border-radius:1px"></div>
<div class="a" style="left:267px;top:689.2px;width:732px;height:25.6px;background:#000"></div><div class="a" style="left:267px;top:689.2px;width:732px;height:24.6px;background:#2e2e2e"></div>
<div class="t" style="left:294.70px;top:695.00px;font-size:12px;color:#d0d0d0;letter-spacing:0.113px;-webkit-text-stroke:0.18px #d0d0d0;">mainpage</div>
<div class="t" style="left:375.50px;top:695.00px;font-size:12px;color:#d0d0d0;letter-spacing:0.105px;-webkit-text-stroke:0.18px #d0d0d0;">content</div>
<div class="t" style="left:443.30px;top:695.00px;font-size:12px;color:#d0d0d0;letter-spacing:0.026px;-webkit-text-stroke:0.18px #d0d0d0;">mainContent</div>
<div class="t" style="left:538.70px;top:695.00px;font-size:12px;color:#d0d0d0;letter-spacing:-0.021px;-webkit-text-stroke:0.18px #d0d0d0;">layoutgrid1</div>
<div class="t" style="left:625.80px;top:695.00px;font-size:12px;color:#d0d0d0;letter-spacing:-0.003px;-webkit-text-stroke:0.18px #d0d0d0;">gridrow1</div>
<div class="t" style="left:700.00px;top:695.00px;font-size:12px;color:#3591da;letter-spacing:0.083px;-webkit-text-stroke:0.18px #3591da;">gridcolumn2</div>
<svg style="left:0;top:0" width="1000" height="721"><g fill="none" stroke="#d6d6d6" stroke-width="1.7"><path d="M358.6 697.4 l4.8 4.45 l-4.8 4.45"/><path d="M426.6 697.4 l4.8 4.45 l-4.8 4.45"/><path d="M521.7 697.4 l4.8 4.45 l-4.8 4.45"/><path d="M607.5 697.4 l4.8 4.45 l-4.8 4.45"/><path d="M683.3 697.4 l4.8 4.45 l-4.8 4.45"/></g></svg>
<!-- RIGHT PANEL -->
<div class="a" style="left:1000px;top:42px;width:280px;height:672.5px;background:#404040"></div>
<div class="t" style="left:1012.00px;top:54.00px;font-size:14.5px;color:#ececec;letter-spacing:-0.134px;-webkit-text-stroke:0.18px #ececec;">wm-gridcolumn: gridcolumn2</div>
<div class="a" style="left:1000px;top:78.6px;width:280px;height:37.2px;background:#0f0f0f"></div>
<div class="a" style="left:1000px;top:78.6px;width:55.8px;height:37.2px;background:linear-gradient(180deg,#4b4b4b,#404040);border-top:2.6px solid #3b86c6"></div>
<svg style="left:0;top:0" width="1280" height="130"><g transform="translate(1027.6 97.2) rotate(35)" fill="none" stroke="#fff" stroke-width="1.3" stroke-linejoin="round"><path d="M-1.9 -9.6 h3.8 v14.6 l-1.9 4 l-1.9 -4z"/><path d="M-1.9 -7 h3.8" stroke-width="0.9"/></g></svg>
<svg style="left:0;top:0" width="1280" height="130"><g fill="none" stroke="#a8a8a8" stroke-width="1.15" stroke-linecap="round"><path d="M1086.5 90.3 C1081 89.3 1075.3 93.5 1075.3 99.5 C1075.3 103.5 1078.3 105.6 1081.3 105 C1083.6 104.5 1083.4 102.6 1084 101.4 C1084.8 99.8 1087 99.9 1089 99.6 C1091.6 99.2 1093.2 97.4 1092.6 95 C1092 92.6 1089.6 90.9 1086.5 90.3Z"/>
<path d="M1091.8 88.8 L1085.6 101.6"/><path d="M1085.8 101 L1083.8 105" stroke-width="2"/></g>
<g fill="#a8a8a8"><circle cx="1081.9" cy="93.4" r="1"/><circle cx="1085.6" cy="93.5" r="1"/><circle cx="1079.8" cy="96.8" r="1"/><circle cx="1078.7" cy="100.4" r="1"/></g></svg>
<svg style="left:0;top:0" width="1280" height="130"><g fill="none" stroke="#a8a8a8" stroke-width="1.2" stroke-linejoin="round"><path d="M1140.4 101.5 a6.75 6.75 0 1 1 4.3 -4.6"/><path d="M1139.6 96.4 l9.6 3.4 l-3.6 1.6 l3 3.4 l-1.6 1.4 l-3 -3.4 l-1.8 3.4z"/></g></svg>
<svg style="left:0;top:0" width="1280" height="130"><g fill="none" stroke="#a8a8a8" stroke-width="1.2" stroke-linejoin="round"><path d="M1199 100.6 h-10.2 a1.4 1.4 0 0 1 -1.4 -1.4 v-6.2 a1.4 1.4 0 0 1 1.4 -1.4 h11 a1.4 1.4 0 0 1 1.4 1.4 v2"/><path d="M1193.6 100.6 v2 M1191 102.8 h5.4"/><rect x="1199.6" y="95.4" width="5.2" height="7.9" rx="1"/></g><rect x="1200.2" y="99.8" width="4" height="3" fill="#777"/></svg>
<svg style="left:0;top:0" width="1280" height="130"><path d="M1252.2 88.8 l7 2.6 v5 c0 4.4 -3 7.6 -7 9.4 c-4 -1.8 -7 -5 -7 -9.4 v-5z" fill="none" stroke="#a8a8a8" stroke-width="1.2" stroke-linejoin="round"/></svg>
<div class="a" style="left:1008.2px;top:124.2px;width:263.6px;height:27.4px;background:#333;border:1px solid #5e5e5e;border-radius:3px"></div>
<svg style="left:0;top:0" width="1280" height="200"><circle cx="1023.6" cy="137.4" r="4.5" fill="none" stroke="#c0c0c0" stroke-width="1.1"/><path d="M1026.9 140.9 l2.3 2.3" stroke="#c0c0c0" stroke-width="1.2"/></svg>
<div class="t" style="left:1036.20px;top:132.50px;font-size:11.5px;color:#7e7e7e;letter-spacing:-0.503px;-webkit-text-stroke:0.18px #7e7e7e;">Search...</div>
<div class="a" style="left:1000px;top:159.3px;width:280px;height:1.2px;background:#5a5a5a"></div>
<div class="t" style="left:1010.30px;top:174.50px;font-size:12px;color:#e2e2e2;letter-spacing:-1.139px;-webkit-text-stroke:0.18px #e2e2e2;">Name</div>
<div class="a" style="left:1010.3px;top:193.2px;width:221.5px;height:27.4px;background:#2d2d2d;border:1px solid #5c5c5c;border-radius:4px"></div>
<div class="t" style="left:1021.00px;top:199.50px;font-size:12px;color:#e6e6e6;letter-spacing:-0.397px;-webkit-text-stroke:0.18px #e6e6e6;">gridcolumn2</div>
<div class="t" style="left:1010.30px;top:238.00px;font-size:12px;color:#e2e2e2;letter-spacing:-0.523px;-webkit-text-stroke:0.18px #e2e2e2;">Insert</div>
<div class="a" style="left:1013.3px;top:257.2px;width:23.3px;height:23.3px;border:1px solid #5e5e5e;border-radius:2px"></div><svg style="left:1013.3px;top:257.2px" width="24" height="24"><rect x="4.2" y="0.5" width="4" height="13.6" fill="#404040" stroke="#d0d0d0" stroke-width="0.9"/><rect x="10.7" y="6.2" width="3.9" height="13.7" fill="#d2d2d2"/><rect x="16.4" y="6.2" width="4.2" height="13.7" fill="#d2d2d2"/></svg>
<div class="a" style="left:1043.5px;top:257.2px;width:23.3px;height:23.3px;border:1px solid #5e5e5e;border-radius:2px"></div><svg style="left:1043.5px;top:257.2px" width="24" height="24"><rect x="15.3" y="0.5" width="4" height="13.6" fill="#404040" stroke="#d0d0d0" stroke-width="0.9"/><rect x="3.9" y="6.2" width="3.9" height="13.7" fill="#d2d2d2"/><rect x="9.6" y="6.2" width="3.9" height="13.7" fill="#d2d2d2"/></svg>
<div class="a" style="left:1000px;top:294.8px;width:280px;height:24.1px;background:#1c1c1c"></div>
<div class="t" style="left:1010.30px;top:300.00px;font-size:14px;color:#f2f2f2;letter-spacing:-0.768px;-webkit-text-stroke:0.18px #f2f2f2;">Layout</div>
<div class="t" style="left:1010.30px;top:335.00px;font-size:12px;color:#e2e2e2;letter-spacing:-0.617px;-webkit-text-stroke:0.18px #e2e2e2;">Height</div>
<div class="a" style="left:1010.3px;top:354.3px;width:221.5px;height:27.2px;background:#2d2d2d;border:1px solid #5c5c5c;border-radius:4px"></div>
<div class="a" style="left:1000px;top:396px;width:280px;height:24px;background:#1c1c1c"></div>
<div class="t" style="left:1010.30px;top:400.50px;font-size:14px;color:#f2f2f2;letter-spacing:-0.729px;-webkit-text-stroke:0.18px #f2f2f2;">Format</div>
<div class="t" style="left:1010.30px;top:436.00px;font-size:12px;color:#e2e2e2;letter-spacing:-0.419px;-webkit-text-stroke:0.18px #e2e2e2;">Horizontal Align</div>
<div class="a" style="left:1010.3px;top:455.2px;width:83.5px;height:30.4px;border:1px solid #8c8c8c;border-radius:2px"></div>
<svg style="left:0;top:0" width="1280" height="500"><g stroke="#a4a4a4" stroke-width="1.3" fill="none"><path d="M1019.9 465 h12.2"/><path d="M1045.8 465 h12.2"/><path d="M1071.6 465 h12.3"/><path d="M1019.9 469 h9.2"/><path d="M1048.8 469 h6.2"/><path d="M1074.6 469 h9.3"/><path d="M1019.9 472.9 h12.2"/><path d="M1045.8 472.9 h12.2"/><path d="M1071.6 472.9 h12.3"/><path d="M1019.9 476.8 h9.2"/><path d="M1048.8 476.8 h6.2"/><path d="M1074.6 476.8 h9.3"/></g></svg>
<div class="t" style="left:1010.30px;top:503.00px;font-size:12px;color:#e2e2e2;letter-spacing:-0.651px;-webkit-text-stroke:0.18px #e2e2e2;">Column Width</div>
<div class="a" style="left:1010.3px;top:522.7px;width:221.5px;height:26.6px;background:#2b2b2b;border:1px solid #5c5c5c;border-radius:4px"></div>
<div class="t" style="left:1021.30px;top:529.00px;font-size:12px;color:#e6e6e6;-webkit-text-stroke:0.18px #e6e6e6;">6</div>
<svg style="left:0;top:0" width="1280" height="560"><path d="M1218.3 533.9 l4.5 4.4 l4.5 -4.4" fill="none" stroke="#fff" stroke-width="1.9"/></svg>

<div class="a" style="left:0;top:714.7px;width:1280px;height:7px;background:#2b2b2b"></div>
</div></div></div>
</body>
</html>
